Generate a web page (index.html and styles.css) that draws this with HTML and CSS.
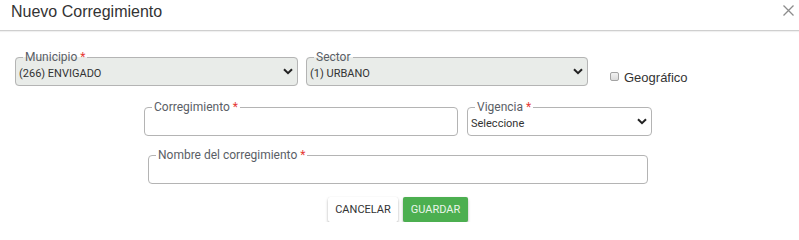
FILE: index.html
```html
<!DOCTYPE html>
<html lang="es">
<head>
<meta charset="utf-8">
<title>Nuevo Corregimiento</title>
<link rel="stylesheet" href="styles.css">
</head>
<body>
<div class="modal">
  <header class="modal-header">
    <h4 class="modal-title">Nuevo Corregimiento</h4>
    <button class="close" type="button" aria-label="Cerrar">
      <svg width="11" height="11" viewBox="0 0 11 11"><path d="M0.5 0.5 L10.5 10.5 M10.5 0.5 L0.5 10.5" stroke="#8c8c8c" stroke-width="1.3" fill="none"/></svg>
    </button>
  </header>
  <div class="modal-body">
    <div class="row row-top">
      <fieldset class="field filled w-municipio">
        <legend>Municipio <span class="req">*</span></legend>
        <div class="control"><span class="value">(266) ENVIGADO</span><svg class="chev" width="10" height="7" viewBox="0 0 10 7"><path d="M1 1.2 L5 5.2 L9 1.2" stroke="#222" stroke-width="2" fill="none"/></svg></div>
      </fieldset>
      <fieldset class="field filled w-sector">
        <legend>Sector</legend>
        <div class="control"><span class="value">(1) URBANO</span><svg class="chev" width="10" height="7" viewBox="0 0 10 7"><path d="M1 1.2 L5 5.2 L9 1.2" stroke="#222" stroke-width="2" fill="none"/></svg></div>
      </fieldset>
      <label class="check"><span class="box"></span>Geográfico</label>
    </div>
    <div class="center">
      <div class="row">
        <fieldset class="field w-corr">
          <legend>Corregimiento <span class="req">*</span></legend>
          <div class="control"></div>
        </fieldset>
        <fieldset class="field w-vig">
          <legend>Vigencia <span class="req">*</span></legend>
          <div class="control"><span class="value">Seleccione</span><svg class="chev" width="10" height="7" viewBox="0 0 10 7"><path d="M1 1.2 L5 5.2 L9 1.2" stroke="#222" stroke-width="2" fill="none"/></svg></div>
        </fieldset>
      </div>
      <div class="row row-name">
        <fieldset class="field w-nombre">
          <legend>Nombre del corregimiento <span class="req">*</span></legend>
          <div class="control"></div>
        </fieldset>
      </div>
      <div class="actions">
        <button class="btn btn-cancel" type="button">CANCELAR</button>
        <button class="btn btn-save" type="button">GUARDAR</button>
      </div>
    </div>
  </div>
</div>
</body>
</html>
```
FILE: styles.css
```css
html, body {
  margin: 0;
  background: #fff;
  font-family: Roboto, "Liberation Sans", sans-serif;
  overflow: hidden;
}

.modal-header {
  display: flex;
  justify-content: space-between;
  align-items: flex-start;
  height: 31px;
  box-sizing: border-box;
  padding: 3px 5px 0 11px;
  border-bottom: 1px solid #cfcfcf;
  box-shadow: 0 1px 1px rgba(0, 0, 0, 0.06);
}

.modal-title {
  margin: 0;
  font: 400 16px/18px "Liberation Sans", Arial, sans-serif;
  color: #333;
}

.close {
  border: 0;
  background: none;
  padding: 0;
  margin-top: 2px;
  width: 11px;
  height: 11px;
  display: flex;
}

.modal-body {
  padding-top: 20px;
}

.row {
  display: flex;
  align-items: flex-start;
  gap: 9px;
}

.row-top {
  gap: 8px;
  padding-left: 15px;
}

.center {
  display: flex;
  flex-direction: column;
  align-items: center;
  padding-right: 3px;
}

.center > .row {
  margin-top: 15px;
}

.center > .row-name {
  margin-top: 13px;
}

.field {
  margin: 0;
  padding: 2px 4px 4px 3px;
  border: 1px solid #b4b4b4;
  border-radius: 4px;
  min-width: 0;
  box-sizing: border-box;
  background: #fff;
}

.field.filled {
  background: #e9ece9;
}

.field legend {
  font-size: 12px;
  line-height: 12px;
  color: #5a5e66;
  padding: 0 2px;
  margin-left: 4px;
}

.req {
  color: #e53935;
}

.control {
  display: flex;
  align-items: center;
  justify-content: space-between;
  height: 16px;
  font-size: 11px;
  color: #333;
}

.chev {
  margin-bottom: 4px;
  flex: none;
}

.w-municipio { width: 283px; }
.w-sector { width: 282px; }
.w-corr { width: 314px; }
.w-vig { width: 185px; }
.w-nombre { width: 500px; }

.check {
  display: flex;
  align-items: flex-start;
  gap: 5px;
  margin: 19px 0 0 14px;
  font: 13px/15px "Liberation Sans", Arial, sans-serif;
  color: #333;
}

.check .box {
  width: 9px;
  height: 9px;
  box-sizing: border-box;
  margin-top: 2px;
  border: 1px solid #a3a3a3;
  border-radius: 2px;
  background: linear-gradient(#f2f2f2, #dcdcdc);
}

.actions {
  display: flex;
  gap: 5px;
  margin-top: 13px;
}

.btn {
  height: 25px;
  padding: 0 7px;
  border: 0;
  border-radius: 2px;
  font: 400 11px/25px Roboto, sans-serif;
  box-shadow: 0 2px 3px rgba(0, 0, 0, 0.28), 0 0 1px rgba(0, 0, 0, 0.12);
}

.btn-cancel {
  background: #fff;
  color: #333;
  width: 70px;
}

.btn-save {
  background: #4caf50;
  color: #eaf5ea;
  width: 65px;
}
```
